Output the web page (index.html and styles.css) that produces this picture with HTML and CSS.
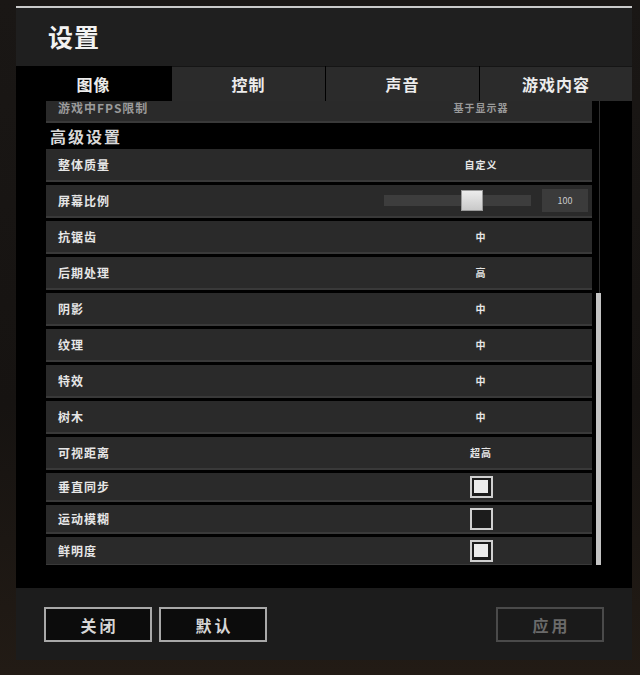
FILE: index.html
```html
<!DOCTYPE html>
<html lang="zh-CN">
<head>
<meta charset="utf-8">
<title>设置</title>
<link rel="stylesheet" href="styles.css">
</head>
<body>
<div class="panel">
  <div class="topline"></div>
  <div class="header"><h1 class="title">设置</h1></div>
  <div class="tabs">
    <div class="tab active">图像</div>
    <div class="tab">控制</div>
    <div class="tab">声音</div>
    <div class="tab">游戏内容</div>
  </div>
  <div class="content">
    <div class="list">
      <div class="row partial"><span class="label dim">游戏中FPS限制</span><span class="value dim">基于显示器</span></div>
      <div class="section">高级设置</div>
      <div class="row"><span class="label">整体质量</span><span class="value">自定义</span></div>
      <div class="row">
        <span class="label">屏幕比例</span>
        <span class="slider">
          <span class="track"><span class="thumb"></span></span>
          <span class="numbox">100</span>
        </span>
      </div>
      <div class="row"><span class="label">抗锯齿</span><span class="value">中</span></div>
      <div class="row"><span class="label">后期处理</span><span class="value">高</span></div>
      <div class="row"><span class="label">阴影</span><span class="value">中</span></div>
      <div class="row"><span class="label">纹理</span><span class="value">中</span></div>
      <div class="row"><span class="label">特效</span><span class="value">中</span></div>
      <div class="row"><span class="label">树木</span><span class="value">中</span></div>
      <div class="row"><span class="label">可视距离</span><span class="value">超高</span></div>
      <div class="row short first-short"><span class="label">垂直同步</span><span class="value"><span class="check on"></span></span></div>
      <div class="row short"><span class="label">运动模糊</span><span class="value"><span class="check"></span></span></div>
      <div class="row short"><span class="label">鲜明度</span><span class="value"><span class="check on"></span></span></div>
    </div>
    <div class="scrollbar"><div class="scroll-thumb"></div></div>
  </div>
  <div class="footer">
    <button class="btn">关闭</button>
    <button class="btn">默认</button>
    <button class="btn disabled">应用</button>
  </div>
</div>
</body>
</html>
```
FILE: styles.css
```css
html, body {
  margin: 0;
  padding: 0;
}
body {
  width: 640px;
  height: 675px;
  overflow: hidden;
  background: linear-gradient(180deg, #1a1715 0%, #161311 60%, #221b15 100%);
  font-family: "Noto Sans CJK SC", "Noto Sans", sans-serif;
}
.panel {
  margin: 6px 0 0 16px;
  width: 616px;
}
.topline {
  height: 2px;
  background: #c9c9c9;
}
.header {
  height: 58px;
  background: #1f1f1f;
  display: flex;
  align-items: center;
}
.title {
  margin: 0 0 2px 32px;
  font-size: 25px;
  font-weight: 700;
  color: #f2f2f2;
  letter-spacing: 1px;
  line-height: 1;
}
.tabs {
  display: grid;
  grid-template-columns: 155px 153px 153px 1fr;
  column-gap: 1px;
  height: 35px;
  background: #000;
}
.tab {
  background: #2b2b2b;
  color: #ececec;
  font-size: 16px;
  font-weight: 700;
  letter-spacing: 1px;
  display: flex;
  align-items: center;
  justify-content: center;
  border-top: 1px solid #151515;
}
.tab.active {
  background: #000;
  border-top-color: #000;
}
.content {
  height: 487px;
  background: #000;
  display: flex;
}
.list {
  margin-left: 30px;
  width: 546px;
  height: 464px;
  overflow: hidden;
}
.row {
  display: grid;
  grid-template-columns: 324px 1fr;
  align-items: center;
  height: 33px;
  box-sizing: border-box;
  background: #2a2a2a;
  border-bottom: 2px solid #393939;
  margin-bottom: 3px;
}
.row.partial {
  margin-top: -11px;
  margin-bottom: 0;
  padding-top: 4px;
}
.row.short {
  height: 29px;
  margin-bottom: 3px;
}
.row.first-short {
  margin-top: 1px;
}
.label {
  padding-left: 12px;
  font-size: 12px;
  font-weight: 700;
  color: #e6e6e6;
  letter-spacing: 1px;
}
.value {
  justify-self: center;
  font-size: 10px;
  font-weight: 700;
  color: #e6e6e6;
  letter-spacing: 1px;
  display: flex;
  align-items: center;
}
.dim {
  color: #9a9a9a;
}
.section {
  height: 26px;
  box-sizing: border-box;
  padding: 3px 0 0 4px;
  font-size: 16px;
  font-weight: 700;
  color: #d8d8d8;
  letter-spacing: 2px;
  line-height: 20px;
}
.slider {
  display: flex;
  align-items: center;
  padding-left: 14px;
}
.track {
  position: relative;
  width: 147px;
  height: 11px;
  background: #3d3d3d;
}
.thumb {
  position: absolute;
  left: 77px;
  top: -5px;
  width: 22px;
  height: 21px;
  box-sizing: border-box;
  background: linear-gradient(180deg, #ececec 0%, #c9c9c9 100%);
  border: 1px solid #9a9a9a;
}
.numbox {
  margin-left: 11px;
  width: 46px;
  height: 23px;
  background: #3b3b3b;
  color: #c9c9c9;
  font-size: 9px;
  display: flex;
  align-items: center;
  justify-content: center;
}
.check {
  width: 23px;
  height: 22px;
  box-sizing: border-box;
  border: 2px solid #d0d0d0;
  background: #1c1c1c;
  display: flex;
  align-items: center;
  justify-content: center;
}
.check.on::after {
  content: "";
  width: 14px;
  height: 13px;
  background: #ececec;
}
.scrollbar {
  margin-left: 4px;
  width: 5px;
  height: 464px;
  position: relative;
  display: flex;
  flex-direction: column;
  justify-content: flex-end;
}
.scrollbar::before {
  content: "";
  position: absolute;
  left: 3px;
  top: 0;
  width: 1px;
  height: 100%;
  background: #2e2e2e;
}
.scroll-thumb {
  position: relative;
  height: 272px;
  width: 5px;
  background: #c4c4c4;
}
.footer {
  height: 72px;
  background: #1c1c1c;
  display: flex;
  align-items: flex-start;
  padding: 19px 28px 0 28px;
  box-sizing: border-box;
  gap: 7px;
}
.btn {
  width: 108px;
  height: 35px;
  background: #0c0c0c;
  border: 2px solid #a8a8a8;
  color: #d6d6d6;
  font-family: "Noto Sans CJK SC", "Noto Sans", sans-serif;
  font-size: 16px;
  font-weight: 700;
  letter-spacing: 3px;
  padding: 0 0 0 3px;
}
.btn.disabled {
  margin-left: auto;
  background: #1a1a1a;
  border-color: #4a4a4a;
  color: #6a6a6a;
}
```
